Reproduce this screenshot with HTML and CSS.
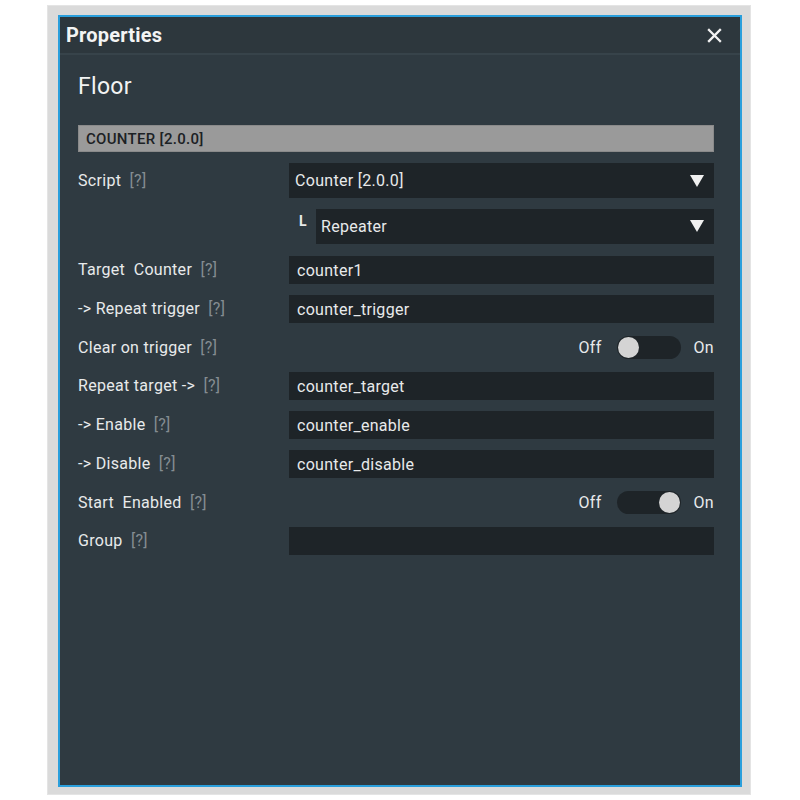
FILE: index.html
```html
<!DOCTYPE html>
<html>
<head>
<meta charset="utf-8">
<link rel="stylesheet" href="styles.css">
</head>
<body>
<div class="frame">
  <div class="window">
    <div class="titlebar">
      <span class="title">Properties</span>
      <svg class="close" width="15" height="15" viewBox="0 0 15 15"><path d="M2 2 L13 13 M13 2 L2 13" stroke="#f2f2f2" stroke-width="2.3" stroke-linecap="square"/></svg>
    </div>
    <div class="content">
      <div class="heading">Floor</div>
      <div class="section">COUNTER [2.0.0]</div>
      <div class="grid">
        <div class="label tall">Script <span class="help">[?]</span></div>
        <div class="select"><span>Counter [2.0.0]</span><span class="tri"></span></div>

        <div class="label tall gapped"></div>
        <div class="subrow gapped"><span class="ell">L</span><div class="select sub"><span>Repeater</span><span class="tri"></span></div></div>

        <div class="label">Target&nbsp; Counter <span class="help">[?]</span></div>
        <div class="input">counter1</div>

        <div class="label">-&gt; Repeat trigger <span class="help">[?]</span></div>
        <div class="input">counter_trigger</div>

        <div class="label">Clear on trigger <span class="help">[?]</span></div>
        <div class="toggle-row"><span>Off</span><span class="track"><span class="knob"></span></span><span>On</span></div>

        <div class="label">Repeat target -&gt; <span class="help">[?]</span></div>
        <div class="input">counter_target</div>

        <div class="label">-&gt; Enable <span class="help">[?]</span></div>
        <div class="input">counter_enable</div>

        <div class="label">-&gt; Disable <span class="help">[?]</span></div>
        <div class="input">counter_disable</div>

        <div class="label">Start&nbsp; Enabled <span class="help">[?]</span></div>
        <div class="toggle-row"><span>Off</span><span class="track on"><span class="knob"></span></span><span>On</span></div>

        <div class="label">Group <span class="help">[?]</span></div>
        <div class="input"></div>
      </div>
    </div>
  </div>
</div>
</body>
</html>
```
FILE: styles.css
```css
html, body {
  margin: 0;
  padding: 0;
  background: #ffffff;
}
body {
  font-family: Roboto, "Noto Sans", sans-serif;
  color: #e6e8e9;
}
.frame {
  margin: 5px 0 0 47px;
  width: 704px;
  height: 790px;
  box-sizing: border-box;
  padding: 9px 8px 9px 10px;
  background: #dadada;
  border: 1px solid #e4e4e4;
}
.window {
  box-sizing: border-box;
  height: 772px;
  border: 2px solid #2a9fdc;
  background: #2f3a41;
  display: flex;
  flex-direction: column;
}
.titlebar {
  height: 36px;
  border-bottom: 2px solid #37434a;
  background: #2d373d;
  display: flex;
  align-items: center;
  justify-content: space-between;
  padding: 0 18px 0 6px;
}
.title {
  font-size: 20px;
  font-weight: 700;
  color: #f3f4f4;
  letter-spacing: 0.2px;
}
.close {
  display: block;
}
.content {
  padding: 17px 26px 0 18px;
}
.heading {
  font-size: 23px;
  color: #f2f3f3;
  height: 30px;
  line-height: 30px;
  letter-spacing: 0.3px;
}
.section {
  margin-top: 23px;
  height: 27px;
  line-height: 27px;
  background: #9a9a9a;
  color: #1c2124;
  font-size: 15px;
  font-weight: 500;
  padding-left: 7px;
  border: 1px solid #8a8a8a;
  box-sizing: border-box;
  letter-spacing: 0.3px;
}
.grid {
  margin-top: 11px;
  display: grid;
  grid-template-columns: 211px 1fr;
  row-gap: 10.7px;
  font-size: 16px;
  letter-spacing: 0.3px;
}
.gapped {
  margin-bottom: 2px;
}
.label {
  height: 28px;
  line-height: 28px;
  color: #e8eaeb;
}
.label.tall {
  height: 35px;
  line-height: 35px;
}
.help {
  color: #858d92;
  margin-left: 4px;
}
.select {
  height: 35px;
  background: #1e2428;
  display: flex;
  align-items: center;
  justify-content: space-between;
  padding: 0 10px 0 6px;
  color: #e8eaeb;
}
.tri {
  width: 0;
  height: 0;
  border-left: 7px solid transparent;
  border-right: 7px solid transparent;
  border-top: 12px solid #f0f0f0;
}
.subrow {
  display: flex;
  align-items: flex-start;
}
.ell {
  width: 27px;
  padding-left: 10px;
  box-sizing: border-box;
  font-size: 14px;
  font-weight: 700;
  line-height: 24px;
}
.select.sub {
  flex: 1;
  padding-left: 5px;
}
.input {
  height: 28px;
  line-height: 30px;
  background: #1e2428;
  padding-left: 8px;
  color: #e8eaeb;
}
.toggle-row {
  height: 28px;
  display: flex;
  align-items: center;
  justify-content: flex-end;
  color: #e8eaeb;
}
.track {
  width: 64px;
  height: 23px;
  border-radius: 12px;
  background: #1e2428;
  margin: 0 13px 0 15px;
  display: flex;
  align-items: center;
  padding: 0 1px;
  box-sizing: border-box;
}
.track.on {
  justify-content: flex-end;
}
.knob {
  width: 21px;
  height: 21px;
  border-radius: 50%;
  background: #d4d4d4;
}
```
